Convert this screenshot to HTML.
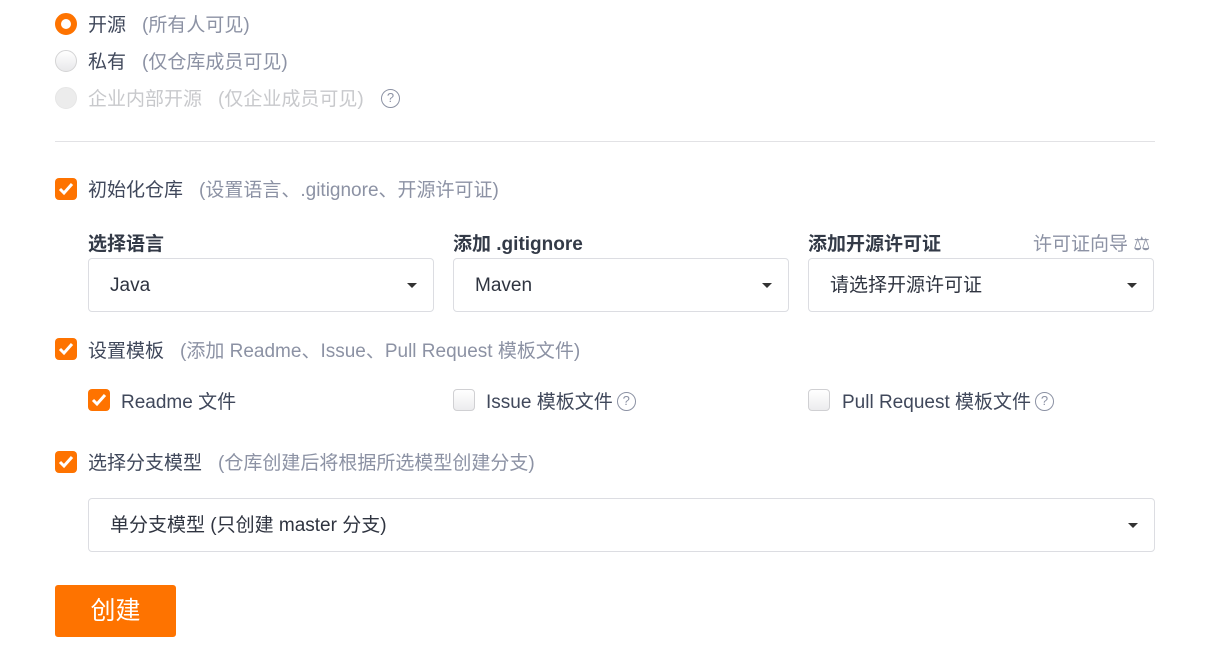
<!DOCTYPE html>
<html><head><meta charset="utf-8"><style>
*{box-sizing:border-box;margin:0;padding:0}
body{width:1228px;height:665px;background:#fff;font-family:"Liberation Sans","Noto Sans CJK SC",sans-serif;color:#40485b;position:relative;overflow:hidden}
.a{position:absolute;white-space:nowrap}
.t{font-size:19px;line-height:22px;transform:translateY(2px)}
.g{color:#8c92a4;margin-left:10px}
.radio{position:absolute;width:22px;height:22px;border-radius:50%;border:1px solid #d4d4d5;background:linear-gradient(#fff,#e8e8ea)}
.radio.on{border:6px solid #fe7300;background:#fff}
.radio.dis{background:#ececec;border-color:#e6e6e6}
.cb{position:absolute;width:22px;height:22px;border-radius:4px;background:#fe7300}
.cb svg{position:absolute;left:3px;top:4px}
.cb.off{background:linear-gradient(#fff,#ececee);border:1px solid #d0d0d3}
.sel{position:absolute;height:54px;border:1px solid #dcdde2;border-radius:4px;font-size:19px;line-height:54px;padding-left:21px;color:#2f3440}
.sel:after{content:"";position:absolute;right:16px;top:24px;border-left:5px solid transparent;border-right:5px solid transparent;border-top:5px solid #333}
.lb{font-size:19px;font-weight:bold;color:#333a47}
.q{display:inline-block;width:19px;height:19px;border:1.5px solid #8c92a4;border-radius:50%;font-size:13px;line-height:16px;text-align:center;color:#8c92a4;vertical-align:3px;margin-left:6px}
</style></head><body>
<div class="radio on" style="left:55px;top:13px"></div>
<div class="a t" style="left:88px;top:13px">开源<span class="g" style="margin-left:16px">(所有人可见)</span></div>
<div class="radio" style="left:55px;top:50px"></div>
<div class="a t" style="left:88px;top:50px">私有<span class="g" style="margin-left:16px">(仅仓库成员可见)</span></div>
<div class="radio dis" style="left:55px;top:87px"></div>
<div class="a t" style="left:88px;top:87px;color:#c8c9cc">企业内部开源<span style="margin-left:16px">(仅企业成员可见)</span> <span class="q" style="margin-left:12px">?</span></div>
<div class="a" style="left:55px;top:141px;width:1100px;height:1px;background:#e2e2e5"></div>

<div class="cb" style="left:55px;top:178px"><svg width="16" height="14"><path d="M2 7l4 4 8-9" stroke="#fff" stroke-width="3" fill="none"/></svg></div>
<div class="a t" style="left:88px;top:178px">初始化仓库<span class="g" style="margin-left:16px">(设置语言、.gitignore、开源许可证)</span></div>

<div class="a lb" style="left:88px;top:229px">选择语言</div>
<div class="a lb" style="left:453px;top:229px">添加 .gitignore</div>
<div class="a lb" style="left:808px;top:229px">添加开源许可证</div>
<div class="a" style="left:1033px;top:229px;font-size:19px;color:#8c92a4">许可证向导 ⚖</div>
<div class="sel" style="left:88px;top:258px;width:346px">Java</div>
<div class="sel" style="left:453px;top:258px;width:336px">Maven</div>
<div class="sel" style="left:808px;top:258px;width:346px">请选择开源许可证</div>

<div class="cb" style="left:55px;top:338px"><svg width="16" height="14"><path d="M2 7l4 4 8-9" stroke="#fff" stroke-width="3" fill="none"/></svg></div>
<div class="a t" style="left:88px;top:339px">设置模板<span class="g" style="margin-left:16px">(添加 Readme、Issue、Pull Request 模板文件)</span></div>

<div class="cb" style="left:88px;top:389px"><svg width="16" height="14"><path d="M2 7l4 4 8-9" stroke="#fff" stroke-width="3" fill="none"/></svg></div>
<div class="a t" style="left:121px;top:390px">Readme 文件</div>
<div class="cb off" style="left:453px;top:389px"></div>
<div class="a t" style="left:486px;top:390px">Issue 模板文件<span class="q" style="margin-left:4px">?</span></div>
<div class="cb off" style="left:808px;top:389px"></div>
<div class="a t" style="left:842px;top:390px">Pull Request 模板文件<span class="q" style="margin-left:4px">?</span></div>

<div class="cb" style="left:55px;top:451px"><svg width="16" height="14"><path d="M2 7l4 4 8-9" stroke="#fff" stroke-width="3" fill="none"/></svg></div>
<div class="a t" style="left:88px;top:451px">选择分支模型<span class="g" style="margin-left:16px">(仓库创建后将根据所选模型创建分支)</span></div>
<div class="sel" style="left:88px;top:498px;width:1067px">单分支模型 (只创建 master 分支)</div>

<div class="a" style="left:55px;top:585px;width:121px;height:52px;background:#fe7300;border-radius:3px;color:#fff;font-size:25px;line-height:52px;text-align:center">创建</div>
</body></html>
